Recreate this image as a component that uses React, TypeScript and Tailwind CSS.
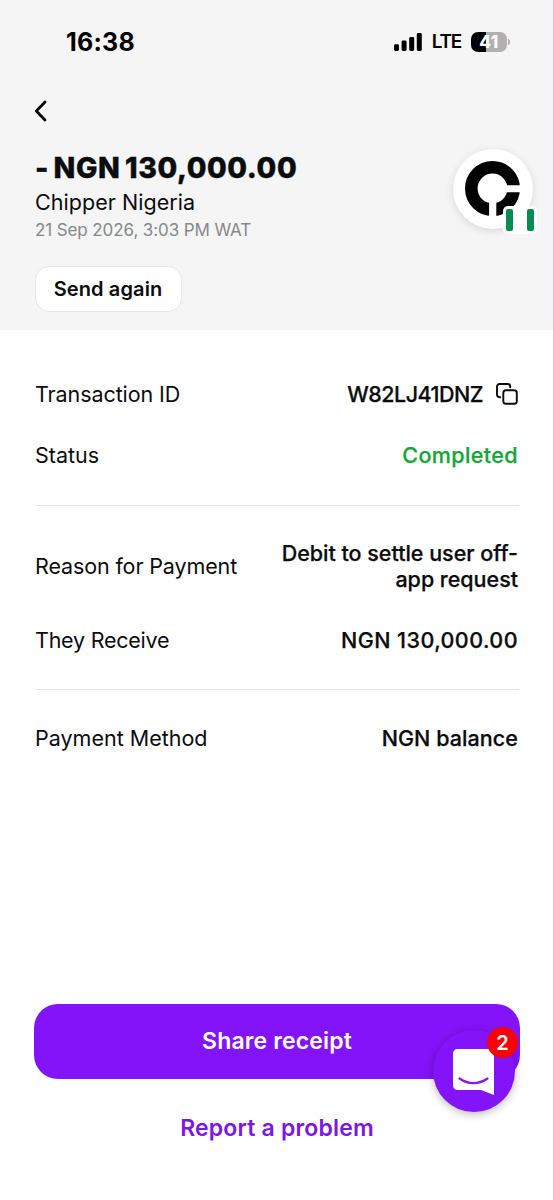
import type { ReactNode } from "react";

function StatusBar() {
  return (
    <div className="flex h-[83px] items-center justify-between pr-[43px] pl-[66px]">
      <span className="text-[25px] leading-[30px] font-bold tracking-[0.01em] text-black">
        16:38
      </span>
      <div className="flex items-center">
        <svg width="28" height="18" viewBox="0 0 28 18" fill="#000">
          <rect x="0" y="11.2" width="5" height="6.8" rx="1.4" />
          <rect x="7.6" y="7.6" width="5" height="10.4" rx="1.4" />
          <rect x="15.2" y="4" width="5" height="14" rx="1.4" />
          <rect x="22.8" y="0" width="5" height="18" rx="1.4" />
        </svg>
        <span className="ml-[10px] text-[19px] leading-6 font-semibold tracking-[-0.065em] text-black">
          LTE
        </span>
        <div className="ml-[10px] flex items-center gap-px">
          <div className="flex h-5 w-9 items-center justify-center rounded-[7px] bg-[linear-gradient(90deg,#000_42%,#b0b0b0_42%)] text-[17px] leading-5 font-extrabold tracking-[0.03em] text-white">
            41
          </div>
          <div className="h-[6px] w-[2px] rounded-r-full bg-[#b0b0b0]" />
        </div>
      </div>
    </div>
  );
}

function Avatar() {
  return (
    <div className="relative mt-[-5px] h-20 w-20 rounded-full bg-white shadow-[0_2px_8px_rgba(0,0,0,0.12)]">
      <svg width="80" height="80" viewBox="0 0 80 80">
        <circle cx="39.5" cy="39.5" r="21.2" fill="none" stroke="#000" strokeWidth="12.6" />
        <path d="M52 36.2h18v7H52zM36.1 52h7.2v18h-7.2z" fill="#fff" />
      </svg>
      {/* Nigerian flag */}
      <div className="absolute top-[57px] left-[50px] flex h-[28px] w-[34px] rounded-[5px] bg-white p-[3px]">
        <div className="w-[7px] rounded-[2px] bg-[#0a8a55]" />
        <div className="flex-1 bg-white" />
        <div className="w-[7px] rounded-[2px] bg-[#0a8a55]" />
      </div>
    </div>
  );
}

function CopyIcon() {
  return (
    <svg width="22" height="22" viewBox="0 0 22 22" fill="none" stroke="#0b0c0e" strokeWidth="1.9" strokeLinecap="round">
      <rect x="7.3" y="7.3" width="13.5" height="13.5" rx="2.6" />
      <path d="M4.2 14.2H3.6A2.6 2.6 0 0 1 1 11.6V3.6A2.6 2.6 0 0 1 3.6 1h8A2.6 2.6 0 0 1 14.2 3.6v.6" />
    </svg>
  );
}

function Row({ label, labelClass, className, children }: { label: string; labelClass: string; className: string; children: ReactNode }) {
  return (
    <div className={`flex items-center justify-between ${className}`}>
      <span className={`text-[21.5px] font-normal whitespace-nowrap ${labelClass}`}>{label}</span>
      <div className="[-webkit-text-stroke-width:0.25px]">{children}</div>
    </div>
  );
}

function ChatButton() {
  return (
    <button className="absolute top-[1030px] left-[433px] flex h-[82px] w-[82px] items-center justify-center rounded-full bg-[#8313f8] shadow-[0_2px_9px_rgba(0,0,0,0.28)]">
      <svg width="42" height="46" viewBox="0 0 42 46" className="mt-[1px]">
        <path d="M4.5 0h32A4.5 4.5 0 0 1 41 4.5V46L28 41H4.5A4.5 4.5 0 0 1 0 36.5v-32A4.5 4.5 0 0 1 4.5 0z" fill="#fff" />
        <path d="M6.5 29.5q14 9.4 28 0" fill="none" stroke="#8313f8" strokeWidth="2.2" strokeLinecap="round" />
      </svg>
      <span className="absolute top-[-3px] left-[54px] flex h-[31px] w-[31px] items-center justify-center rounded-full bg-[#fb0007] text-[20px] leading-none font-semibold text-white">
        2
      </span>
    </button>
  );
}

export default function App() {
  return (
    <main className="relative flex h-[1200px] w-full flex-col overflow-hidden border-r border-[#c9c9cb] bg-white font-['Inter','Liberation_Sans',sans-serif] text-[#0b0c0e]">
      <header className="h-[330px] bg-[#f5f5f5]">
        <StatusBar />
        <button className="mt-[17px] ml-[34px] block">
          <svg width="13" height="22" viewBox="0 0 13 22" fill="none" stroke="#000" strokeWidth="2.8" strokeLinecap="round" strokeLinejoin="round">
            <path d="M11 2 2.3 11 11 20" />
          </svg>
        </button>

        <div className="mt-[32px] flex items-start justify-between pr-5 pl-[35px]">
          <div className="flex flex-col items-start">
            <h1 className="text-[28.5px] leading-7 font-extrabold tracking-[0.021em] [word-spacing:-0.08em] [-webkit-text-stroke:0.4px_#0b0c0e] whitespace-nowrap">
              - NGN 130,000.00
            </h1>
            <p className="mt-[6px] text-[21.5px] leading-7 tracking-[0.002em]">Chipper Nigeria</p>
            <p className="mt-[2px] text-[17px] leading-6 tracking-[-0.006em] text-[#85898b]">21 Sep 2026, 3:03 PM WAT</p>
            <button className="mt-[24px] flex h-[46px] w-[147px] items-center justify-center rounded-[14px] border border-[#e6e6e8] bg-white pr-[1px] text-[20px] font-semibold tracking-[0.006em]">
              Send again
            </button>
          </div>
          <Avatar />
        </div>
      </header>

      <section className="mr-[35px] ml-[35px] flex flex-col pt-[49px] text-[21.5px] font-medium">
        <Row label="Transaction ID" labelClass="tracking-[-0.004em]" className="h-[30px]">
          <span className="flex items-center gap-[13px]">
            <span className="tracking-[-0.024em]">W82LJ41DNZ</span>
            <CopyIcon />
          </span>
        </Row>
        <Row label="Status" labelClass="tracking-normal" className="mt-[31px] h-[30px]">
          <span className="tracking-[0.018em] text-[#15a638]">Completed</span>
        </Row>
        <hr className="mt-[35px] mr-[-1px] border-[#e4e4e6]" />
        <Row label="Reason for Payment" labelClass="tracking-[-0.006em]" className="mt-[34px] h-[52px]">
          <p className="text-right leading-[26px] tracking-[-0.001em]">
            Debit to settle user off-
            <br />
            app request
          </p>
        </Row>
        <Row label="They Receive" labelClass="tracking-[-0.011em]" className="mt-[33px] h-[30px]">
          <span className="tracking-[0.021em]">NGN 130,000.00</span>
        </Row>
        <hr className="mt-[34px] mr-[-1px] border-[#e4e4e6]" />
        <Row label="Payment Method" labelClass="tracking-normal" className="mt-[33px] h-[30px]">
          <span className="tracking-[0.003em]">NGN balance</span>
        </Row>
      </section>

      <footer className="mt-auto flex flex-col items-center pr-[33px] pb-[57px] pl-[34px]">
        <button className="flex h-[75px] w-full items-center justify-center rounded-[24px] bg-[#8313f8] pb-[1px] text-[23px] font-semibold tracking-[0.006em] text-white">
          Share receipt
        </button>
        <button className="mt-[34px] text-[23px] leading-[30px] font-semibold tracking-[0.008em] text-[#7c16e6]">Report a problem</button>
      </footer>

      <ChatButton />
    </main>
  );
}
